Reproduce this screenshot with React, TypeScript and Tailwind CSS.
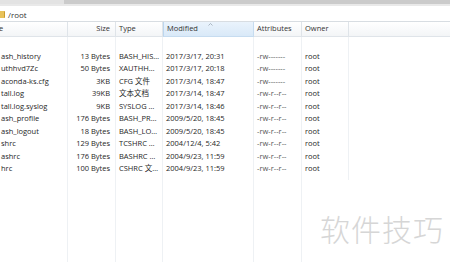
import React from 'react'

type FileRow = {
  name: string
  size: string
  type: string
  modified: string
  attributes: string
  owner: string
}

const files: FileRow[] = [
  { name: 'ash_history', size: '13 Bytes', type: 'BASH_HIS…', modified: '2017/3/17, 20:31', attributes: '-rw-------', owner: 'root' },
  { name: 'uthhvd7Zc', size: '50 Bytes', type: 'XAUTHH…', modified: '2017/3/17, 20:18', attributes: '-rw-------', owner: 'root' },
  { name: 'aconda-ks.cfg', size: '3KB', type: 'CFG 文件', modified: '2017/3/14, 18:47', attributes: '-rw-------', owner: 'root' },
  { name: 'tall.log', size: '39KB', type: '文本文档', modified: '2017/3/14, 18:47', attributes: '-rw-r--r--', owner: 'root' },
  { name: 'tall.log.syslog', size: '9KB', type: 'SYSLOG …', modified: '2017/3/14, 18:46', attributes: '-rw-r--r--', owner: 'root' },
  { name: 'ash_profile', size: '176 Bytes', type: 'BASH_PR…', modified: '2009/5/20, 18:45', attributes: '-rw-r--r--', owner: 'root' },
  { name: 'ash_logout', size: '18 Bytes', type: 'BASH_LO…', modified: '2009/5/20, 18:45', attributes: '-rw-r--r--', owner: 'root' },
  { name: 'shrc', size: '129 Bytes', type: 'TCSHRC …', modified: '2004/12/4, 5:42', attributes: '-rw-r--r--', owner: 'root' },
  { name: 'ashrc', size: '176 Bytes', type: 'BASHRC …', modified: '2004/9/23, 11:59', attributes: '-rw-r--r--', owner: 'root' },
  { name: 'hrc', size: '100 Bytes', type: 'CSHRC 文…', modified: '2004/9/23, 11:59', attributes: '-rw-r--r--', owner: 'root' },
]

type ColumnProps = {
  title: string
  width: string
  field: keyof FileRow
  alignRight?: boolean
  active?: boolean
  textClass?: string
}

const Column: React.FC<ColumnProps> = ({ title, width, field, alignRight, active, textClass }) => (
  <div className={`${width} shrink-0 flex flex-col`}>
    <div
      className={`h-[15px] flex items-center relative border-b border-r px-[3px] ${
        active
          ? 'bg-gradient-to-b from-[#eaf3fc] to-[#d9e9f8] border-[#c6dcf0] border-l border-l-[#bcd6ee]'
          : 'bg-gradient-to-b from-white to-[#f3f5f7] border-[#dfe4e9]'
      } ${alignRight ? 'justify-end pr-[5px]' : ''}`}
    >
      <span className="text-[7.5px] text-[#333] whitespace-nowrap">{title}</span>
      {active && (
        <svg className="absolute left-[44px] top-[1px]" width="5" height="3" viewBox="0 0 5 3">
          <path d="M0.5 2.5 L2.5 0.5 L4.5 2.5" fill="none" stroke="#9aa7b4" strokeWidth="0.8" />
        </svg>
      )}
    </div>
    <div className="flex-1 flex flex-col border-r border-[#eef1f4]">
      <div className="h-[13px]" />
      {files.map((f) => (
        <div
          key={f.name}
          className={`h-[12.55px] flex items-center whitespace-nowrap overflow-hidden ${
            alignRight ? 'justify-end pr-[5px]' : 'pl-[3px]'
          }`}
        >
          <span className={`text-[7.5px] leading-none ${textClass ?? 'text-[#262626]'}`}>{f[field]}</span>
        </div>
      ))}
    </div>
  </div>
)

const App: React.FC = () => {
  return (
    <div className="w-[450px] h-[262px] overflow-hidden bg-white relative flex flex-col font-['Open_Sans','Noto_Sans_CJK_SC',sans-serif]">
      {/* tab strip */}
      <div className="h-[4px] flex shrink-0">
        <div className="w-[64px] bg-[#e3e3e3]" />
        <div className="flex-1 bg-[#cbcbcb]" />
      </div>
      <div className="h-[2px] bg-[#e9e9e9] shrink-0" />

      {/* address bar */}
      <div className="h-[16px] shrink-0 flex items-center pt-[2px] border-b border-[#d8dde2]">
        <div className="w-[5px] h-[7px] bg-[#e8c25a] rounded-r-[1px] border-r border-[#c99b2e]" />
        <span className="ml-[3px] text-[8px] text-[#333]">/root</span>
      </div>

      {/* list */}
      <div className="flex-1 flex">
        <div className="w-[68px] shrink-0 flex flex-col">
          <div className="h-[15px] flex items-center border-b border-r border-[#dfe4e9] bg-gradient-to-b from-white to-[#f3f5f7]">
            <span className="text-[7.5px] text-[#333] -ml-[1px]">e</span>
          </div>
          <div className="flex-1 flex flex-col border-r border-[#eef1f4]">
            <div className="h-[13px]" />
            {files.map((f) => (
              <div key={f.name} className="h-[12.55px] flex items-center whitespace-nowrap overflow-hidden pl-[1px]">
                <span className="text-[7.5px] leading-none text-[#262626]">{f.name}</span>
              </div>
            ))}
          </div>
        </div>
        <Column title="Size" width="w-[48px]" field="size" alignRight />
        <Column title="Type" width="w-[47px]" field="type" />
        <Column title="Modified" width="w-[91px]" field="modified" active />
        <Column title="Attributes" width="w-[48px]" field="attributes" textClass="text-[#555]" />
        <div className="w-[47px] shrink-0 flex flex-col">
          <div className="h-[15px] flex items-center px-[3px] border-b border-r border-[#dfe4e9] bg-gradient-to-b from-white to-[#f3f5f7]">
            <span className="text-[7.5px] text-[#333]">Owner</span>
          </div>
          <div className="h-[143px] flex flex-col border-r border-[#eef1f4]">
            <div className="h-[13px]" />
            {files.map((f) => (
              <div key={f.name} className="h-[12.55px] flex items-center pl-[3px]">
                <span className="text-[7.5px] leading-none text-[#262626]">{f.owner}</span>
              </div>
            ))}
          </div>
        </div>
        <div className="flex-1 flex flex-col">
          <div className="h-[15px] border-b border-[#dfe4e9] bg-gradient-to-b from-white to-[#f3f5f7]" />
        </div>
      </div>

      {/* watermark */}
      <div className="absolute left-[320px] top-[206px] text-[30px] font-light tracking-[1px] text-[#d6d6d6] font-['Noto_Sans_CJK_SC',sans-serif]">
        软件技巧
      </div>
    </div>
  )
}

export default App
